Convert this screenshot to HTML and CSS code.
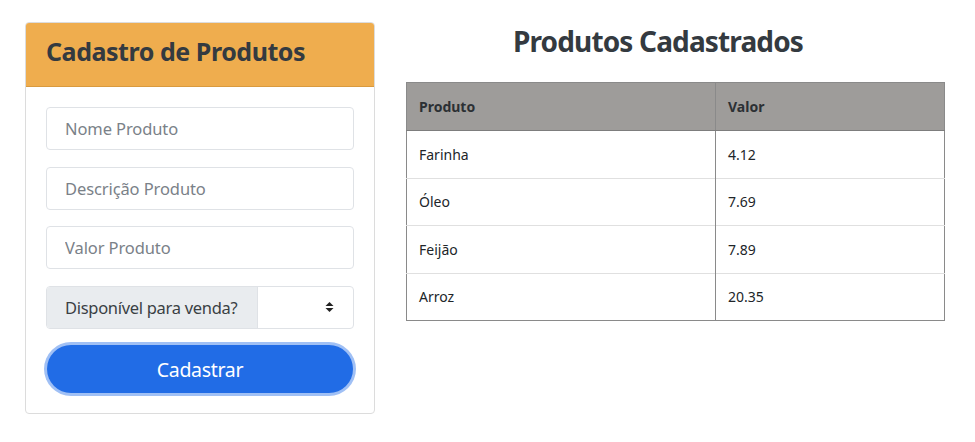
FILE: index.html
```html
<!DOCTYPE html>
<html lang="pt-BR">
<head>
<meta charset="utf-8">
<title>Produtos</title>
<link rel="stylesheet" href="styles.css">
</head>
<body>
<div class="page">
  <section class="card">
    <header class="card-header"><h1 class="card-title">Cadastro de Produtos</h1></header>
    <form class="card-body">
      <input class="field" type="text" placeholder="Nome Produto">
      <input class="field" type="text" placeholder="Descrição Produto">
      <input class="field" type="text" placeholder="Valor Produto">
      <div class="input-group">
        <span class="group-label">Disponível para venda?</span>
        <div class="group-select">
          <svg class="caret" width="9" height="12" viewBox="0 0 9 12"><path d="M4.5 1 L8.5 5 H0.5 Z M4.5 11 L0.5 7 H8.5 Z" fill="#222"/></svg>
        </div>
      </div>
      <button class="btn" type="button">Cadastrar</button>
    </form>
  </section>
  <section class="list">
    <h2 class="list-title">Produtos Cadastrados</h2>
    <table class="table">
      <thead>
        <tr><th class="col-a">Produto</th><th>Valor</th></tr>
      </thead>
      <tbody>
        <tr><td>Farinha</td><td>4.12</td></tr>
        <tr><td>Óleo</td><td>7.69</td></tr>
        <tr><td>Feijão</td><td>7.89</td></tr>
        <tr><td>Arroz</td><td>20.35</td></tr>
      </tbody>
    </table>
  </section>
</div>
</body>
</html>
```
FILE: styles.css
```css
* { box-sizing: border-box; }
html, body { margin: 0; padding: 0; background: #fff; }
body {
  font-family: "Noto Sans", "Open Sans", sans-serif;
  color: #212529;
}
.page {
  display: flex;
  align-items: flex-start;
  padding: 22px 0 0 25px;
  gap: 31px;
}
.card {
  width: 350px;
  border: 1px solid #dcdcdc;
  border-radius: 4px;
  overflow: hidden;
}
.card-header {
  background: #efad4e;
  border-bottom: 1px solid #d99a3e;
  padding: 13px 20px 20px;
}
.card-title {
  margin: 0;
  font-size: 25px;
  line-height: 30px;
  font-weight: 700;
  letter-spacing: -0.45px;
  color: #343a40;
}
.card-body {
  padding: 20px 20px 20px;
  display: flex;
  flex-direction: column;
}
.field {
  display: block;
  width: 100%;
  height: 43px;
  margin: 0 0 16.5px;
  padding: 0 18px;
  border: 1px solid #dfe2e6;
  border-radius: 4px;
  font-family: inherit;
  font-size: 16.5px;
  letter-spacing: -0.1px;
  color: #212529;
  background: #fff;
}
.field::placeholder { color: #7a8188; }
.input-group {
  display: flex;
  height: 43px;
  margin-bottom: 16.5px;
  border: 1px solid #dfe2e6;
  border-radius: 4px;
  overflow: hidden;
}
.group-label {
  display: flex;
  align-items: center;
  padding: 0 18px;
  width: 211px;
  background: #e9ecef;
  border-right: 1px solid #dfe2e6;
  font-size: 16.5px;
  letter-spacing: -0.3px;
  color: #3a3f44;
  white-space: nowrap;
}
.group-select {
  flex: 1;
  display: flex;
  align-items: center;
  justify-content: flex-end;
  padding-right: 19px;
}
.btn {
  height: 48px;
  margin: 0 1px;
  border: none;
  border-radius: 24px;
  background: #216ce6;
  color: #fff;
  font-family: inherit;
  font-size: 19.5px;
  letter-spacing: -0.3px;
  box-shadow: 0 0 0 3px #a0c0f5;
}
.list {
  width: 539px;
  display: flex;
  flex-direction: column;
}
.list-title {
  margin: 2px 35px 24px 0;
  text-align: center;
  font-size: 28px;
  line-height: 34px;
  font-weight: 700;
  letter-spacing: -0.85px;
  color: #343a40;
}
.table {
  width: 539px;
  border-collapse: collapse;
  border: 1px solid #8a8a8a;
  font-size: 14px;
}
.table th, .table td {
  text-align: left;
  padding: 0 12px;
  height: 47.5px;
}
.table th {
  background: #9e9c9a;
  font-weight: 700;
  color: #2c3034;
  border-bottom: 1px solid #7d7d7d;
  height: 48px;
}
.table td { border-top: 1px solid #e0e0e0; color: #212529; }
.table th + th, .table td + td { border-left: 1px solid #8a8a8a; }
.col-a { width: 309px; }
```
